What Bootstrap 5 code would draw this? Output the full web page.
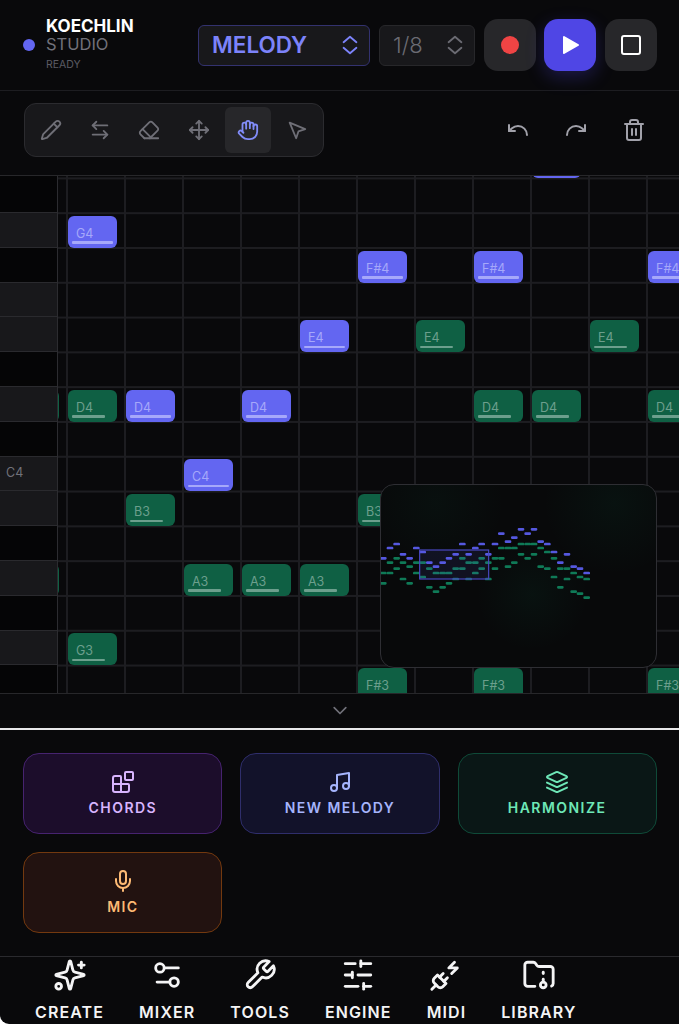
<!DOCTYPE html>
<html lang="en">
<head>
    <meta charset="UTF-8">
    <meta name="viewport" content="width=device-width, initial-scale=1.0">
    <title>Koechlin Studio</title>
    <link href="https://cdn.jsdelivr.net/npm/bootstrap@5.3.2/dist/css/bootstrap.min.css" rel="stylesheet">
    <style>
        html, body { height: 100%; }
        body { background: #fff; font-family: Inter, "Liberation Sans", sans-serif; overflow: hidden; }
        .app { width: 679px; height: 1024px; background: #09090b; border-bottom-left-radius: 9px; overflow: hidden; }
        .ico { fill: none; stroke: currentColor; stroke-width: 2; stroke-linecap: round; stroke-linejoin: round; flex: none; }

        /* header */
        .top-bar { height: 91px; border-bottom: 1px solid #1d1d21; padding: 19px 22px 19px 23px; }
        .live-dot { width: 12px; height: 12px; border-radius: 50%; background: #6366f1; margin-right: 11px; }
        .brand { width: 152px; line-height: 18px; }
        .brand-a { font-size: 17px; font-weight: 700; color: #fff; }
        .brand-b { font-size: 16.5px; color: #71717a; }
        .brand-c { font-size: 10.5px; color: #5b5b63; margin-top: 4px; line-height: 16px; }
        .picker { height: 41px; border-radius: 6px; background: #18181b; border: 1px solid #27272a; padding: 0 8px 0 13px; }
        .picker-main { width: 172px; border-color: #33326f; color: #7c83fa; font-size: 22.5px; font-weight: 600; margin-right: 9px; }
        .picker-sub { width: 96px; color: #6b6b73; font-size: 22px; font-weight: 300; margin-right: 9px; }
        .trn { width: 52px; height: 52px; border-radius: 14px; background: #27272a; color: #fff; margin-right: 8px; }
        .trn:last-child { margin-right: 0; }
        .trn-play { background: #4f46e5; box-shadow: 0 6px 18px rgba(79, 70, 229, .28); margin-right: 9px; }
        .rec-dot { width: 18px; height: 18px; border-radius: 50%; background: #ef4444; }

        /* toolbar */
        .tool-bar { height: 85px; border-bottom: 1px solid #27272a; padding: 0 22px 7px 24px; }
        .tool-group { width: 300px; height: 54px; background: #18181b; border: 1px solid #2b2b2f; border-radius: 12px; padding: 3px; gap: 3.25px; }
        .tool-btn { width: 46px; height: 46px; border-radius: 6px; color: #6f6f77; }
        .tool-on { background: #27272a; color: #818cf8; }
        .side-btn { width: 46px; height: 46px; color: #a1a1aa; }

        /* piano roll */
        .roll { height: 517px; overflow: hidden; }
        .keys { width: 58px; border-right: 1px solid #2c2c30; background: #050506; z-index: 2; flex: none; }
        .pkey { height: 34.8px; border-bottom: 1px solid #2a2a2e; color: #71717a; font-size: 12.5px; padding-left: 6px; flex: none; }
        .pkey-w { background: #18181b; }
        .pkey-first { height: 37px; }
        .grid-area {
            background-color: #09090b;
            background-image: linear-gradient(to right, #1d1d21 2px, transparent 2px), linear-gradient(to bottom, #1d1d21 2px, transparent 2px);
            background-size: 58px 100%, 100% 34.8px;
            background-position: 8px 0, 0 1.4px;
        }
        .pnote { position: absolute; width: 49px; height: 32px; border-radius: 6px; font-size: 12.5px; line-height: 1; padding: 12px 0 0 8px; }
        .pnote::after { content: ""; position: absolute; left: 4px; bottom: 4px; height: 2.5px; border-radius: 1px; background: currentColor; }
        .pnote-b { background: #6366f1; color: #a6a8fa; }
        .pnote-b::after { width: 41px; }
        .pnote-g { background: #0f6044; color: #6c9f8d; }
        .pnote-g::after { width: 33px; }
        .minimap {
            position: absolute; right: 22px; top: 308px; width: 277px; height: 184px; z-index: 3;
            background: radial-gradient(circle at 55% 60%, rgba(16, 185, 129, .05), transparent 30%), radial-gradient(circle at 85% 10%, rgba(16, 185, 129, .05), transparent 25%), radial-gradient(circle at 20% 10%, rgba(16, 185, 129, .04), transparent 25%), #08090a;
            border: 1px solid #2e2e33; border-radius: 14px; overflow: hidden;
        }
        .fold-bar { height: 35px; border-top: 1px solid #27272a; color: #71717a; }
        .sheet-line { height: 2px; background: #e8e8ea; }

        /* actions */
        .action-grid { display: grid; grid-template-columns: repeat(3, 1fr); gap: 18px; padding: 23px 22.3px 23px 23.3px; height: 226px; grid-auto-rows: 81px; }
        .act { border-radius: 16px; border: 1px solid; font-size: 14px; font-weight: 600; letter-spacing: 1.45px; line-height: 1; gap: 7px; padding: 0 0 2px; }
        .act-pur, .act-pur:hover { background: #1c0d2b; border-color: #46236f; color: #d8b4fe; }
        .act-ind, .act-ind:hover { background: #12122a; border-color: #2f2e6b; color: #a5b4fc; }
        .act-grn, .act-grn:hover { background: #0a1716; border-color: #0f4a38; color: #6ee7b7; }
        .act-org, .act-org:hover { background: #221210; border-color: #73390f; color: #fdba74; }

        /* bottom nav */
        .bottom-nav { height: 68px; border-top: 1px solid #2a2a2e; padding-left: 35px; gap: 35px; color: #f4f4f5; }
        .nav-item { font-size: 16px; font-weight: 600; letter-spacing: 1.1px; line-height: 1; gap: 12px; padding-top: 1px; }
    </style>
</head>
<body>
<div class="app d-flex flex-column">

    <div class="top-bar d-flex align-items-center">
        <span class="live-dot"></span>
        <div class="brand">
            <div class="brand-a">KOECHLIN</div>
            <div class="brand-b">STUDIO</div>
            <div class="brand-c">READY</div>
        </div>
        <div class="picker picker-main d-flex align-items-center justify-content-between">
            MELODY
            <svg class="ico" width="22" height="24" viewBox="0 0 24 24"><path d="m5 15 7 6 7-6"/><path d="m5 9 7-6 7 6"/></svg>
        </div>
        <div class="picker picker-sub d-flex align-items-center justify-content-between">
            1/8
            <svg class="ico" width="22" height="24" viewBox="0 0 24 24"><path d="m5 15 7 6 7-6"/><path d="m5 9 7-6 7 6"/></svg>
        </div>
        <div class="trn d-flex align-items-center justify-content-center"><span class="rec-dot"></span></div>
        <div class="trn trn-play d-flex align-items-center justify-content-center">
            <svg width="24" height="24" viewBox="0 0 24 24"><path d="M6 4 20 12 6 20z" fill="#fff" stroke="#fff" stroke-width="2" stroke-linejoin="round"/></svg>
        </div>
        <div class="trn d-flex align-items-center justify-content-center">
            <svg class="ico" width="24" height="24" viewBox="0 0 24 24"><rect x="3" y="3" width="18" height="18" rx="2"/></svg>
        </div>
    </div>

    <div class="tool-bar d-flex align-items-center justify-content-between">
        <div class="tool-group d-flex align-items-center">
            <div class="tool-btn d-flex align-items-center justify-content-center">
                <svg class="ico" width="22" height="22" viewBox="0 0 24 24"><path d="M21.174 6.812a1 1 0 0 0-3.986-3.987L3.842 16.174a2 2 0 0 0-.5.83l-1.321 4.352a.5.5 0 0 0 .623.622l4.353-1.32a2 2 0 0 0 .83-.497z"/><path d="m15 5 4 4"/></svg>
            </div>
            <div class="tool-btn d-flex align-items-center justify-content-center">
                <svg class="ico" width="22" height="22" viewBox="0 0 24 24"><path d="M8 3 4 7l4 4"/><path d="M4 7h16"/><path d="m16 21 4-4-4-4"/><path d="M20 17H4"/></svg>
            </div>
            <div class="tool-btn d-flex align-items-center justify-content-center">
                <svg class="ico" width="22" height="22" viewBox="0 0 24 24"><path d="m7 21-4.3-4.3c-1-1-1-2.5 0-3.4l9.6-9.6c1-1 2.5-1 3.4 0l5.6 5.6c1 1 1 2.5 0 3.4L13 21"/><path d="M22 21H7"/><path d="m5 11 9 9"/></svg>
            </div>
            <div class="tool-btn d-flex align-items-center justify-content-center">
                <svg class="ico" width="22" height="22" viewBox="0 0 24 24"><path d="M12 2v20"/><path d="m15 19-3 3-3-3"/><path d="m19 9 3 3-3 3"/><path d="M2 12h20"/><path d="m5 9-3 3 3 3"/><path d="m9 5 3-3 3 3"/></svg>
            </div>
            <div class="tool-btn tool-on d-flex align-items-center justify-content-center">
                <svg class="ico" width="22" height="22" viewBox="0 0 24 24"><path d="M18 11V6a2 2 0 0 0-2-2a2 2 0 0 0-2 2"/><path d="M14 10V4a2 2 0 0 0-2-2a2 2 0 0 0-2 2v2"/><path d="M10 10.5V6a2 2 0 0 0-2-2a2 2 0 0 0-2 2v8"/><path d="M18 8a2 2 0 1 1 4 0v6a8 8 0 0 1-8 8h-2c-2.8 0-4.5-.86-5.99-2.34l-3.6-3.6a2 2 0 0 1 2.83-2.82L7 15"/></svg>
            </div>
            <div class="tool-btn d-flex align-items-center justify-content-center">
                <svg class="ico" width="22" height="22" viewBox="0 0 24 24"><path d="m4 4 7.07 17 2.51-7.39L21 11.07z"/></svg>
            </div>
        </div>
        <div class="d-flex gap-2">
            <div class="side-btn d-flex align-items-center justify-content-center">
                <svg class="ico" width="24" height="24" viewBox="0 0 24 24"><path d="M3 7v6h6"/><path d="M21 17a9 9 0 0 0-9-9 9 9 0 0 0-6 2.3L3 13"/></svg>
            </div>
            <div class="side-btn ms-1 d-flex align-items-center justify-content-center">
                <svg class="ico" width="24" height="24" viewBox="0 0 24 24"><path d="M21 7v6h-6"/><path d="M3 17a9 9 0 0 1 9-9 9 9 0 0 1 6 2.3l3 2.7"/></svg>
            </div>
            <div class="side-btn ms-1 d-flex align-items-center justify-content-center">
                <svg class="ico" width="24" height="24" viewBox="0 0 24 24"><path d="M3 6h18"/><path d="M19 6v14c0 1-1 2-2 2H7c-1 0-2-1-2-2V6"/><path d="M8 6V4c0-1 1-2 2-2h4c1 0 2 1 2 2v2"/><path d="M10 11v6"/><path d="M14 11v6"/></svg>
            </div>
        </div>
    </div>

    <div class="roll d-flex position-relative">
        <div class="keys position-relative d-flex flex-column" id="keys"></div>
        <div class="grid-area flex-grow-1 position-relative" id="gridArea"></div>
        <div class="minimap">
            <svg width="275" height="182" viewBox="33 31 825 546" id="miniSvg"></svg>
        </div>
    </div>

    <div class="fold-bar d-flex align-items-center justify-content-center">
        <svg class="ico" width="20" height="20" viewBox="0 0 24 24"><path d="m5 8 7 7 7-7"/></svg>
    </div>
    <div class="sheet-line"></div>

    <div class="action-grid">
        <button class="btn act act-pur d-flex flex-column align-items-center justify-content-center">
            <svg class="ico" width="24" height="24" viewBox="0 0 24 24"><path d="M10 22V7a1 1 0 0 0-1-1H4a2 2 0 0 0-2 2v12a2 2 0 0 0 2 2h12a2 2 0 0 0 2-2v-5a1 1 0 0 0-1-1H2"/><rect x="14" y="2" width="8" height="8" rx="1"/></svg>
            CHORDS
        </button>
        <button class="btn act act-ind d-flex flex-column align-items-center justify-content-center">
            <svg class="ico" width="24" height="24" viewBox="0 0 24 24"><path d="M9 18V5l12-2v13"/><circle cx="6" cy="18" r="3"/><circle cx="18" cy="16" r="3"/></svg>
            NEW MELODY
        </button>
        <button class="btn act act-grn d-flex flex-column align-items-center justify-content-center">
            <svg class="ico" width="24" height="24" viewBox="0 0 24 24"><path d="M12.83 2.18a2 2 0 0 0-1.66 0L2.6 6.08a1 1 0 0 0 0 1.83l8.58 3.91a2 2 0 0 0 1.66 0l8.58-3.9a1 1 0 0 0 0-1.83Z"/><path d="m22 17.65-9.17 4.16a2 2 0 0 1-1.66 0L2 17.65"/><path d="m22 12.65-9.17 4.16a2 2 0 0 1-1.66 0L2 12.65"/></svg>
            HARMONIZE
        </button>
        <button class="btn act act-org d-flex flex-column align-items-center justify-content-center">
            <svg class="ico" width="24" height="24" viewBox="0 0 24 24"><path d="M12 2a3 3 0 0 0-3 3v7a3 3 0 0 0 6 0V5a3 3 0 0 0-3-3Z"/><path d="M19 10v2a7 7 0 0 1-14 0v-2"/><path d="M12 19v3"/></svg>
            MIC
        </button>
    </div>

    <div class="bottom-nav d-flex">
        <div class="nav-item d-flex flex-column align-items-center">
            <svg class="ico" width="34" height="34" viewBox="0 0 24 24"><path d="M9.937 15.5A2 2 0 0 0 8.5 14.063l-6.135-1.582a.5.5 0 0 1 0-.962L8.5 9.936A2 2 0 0 0 9.937 8.5l1.582-6.135a.5.5 0 0 1 .963 0L14.063 8.5A2 2 0 0 0 15.5 9.937l6.135 1.581a.5.5 0 0 1 0 .964L15.5 14.063a2 2 0 0 0-1.437 1.437l-1.582 6.135a.5.5 0 0 1-.963 0z"/><path d="M20 3v4"/><path d="M22 5h-4"/><circle cx="4" cy="20" r="2"/></svg>
            CREATE
        </div>
        <div class="nav-item d-flex flex-column align-items-center">
            <svg class="ico" width="34" height="34" viewBox="0 0 24 24"><path d="M20 7h-9"/><path d="M14 17H5"/><circle cx="17" cy="17" r="3"/><circle cx="7" cy="7" r="3"/></svg>
            MIXER
        </div>
        <div class="nav-item d-flex flex-column align-items-center">
            <svg class="ico" width="34" height="34" viewBox="0 0 24 24"><path d="M14.7 6.3a1 1 0 0 0 0 1.4l1.6 1.6a1 1 0 0 0 1.4 0l3.77-3.77a6 6 0 0 1-7.94 7.94l-6.91 6.91a2.12 2.12 0 0 1-3-3l6.91-6.91a6 6 0 0 1 7.94-7.94l-3.76 3.76z"/></svg>
            TOOLS
        </div>
        <div class="nav-item d-flex flex-column align-items-center">
            <svg class="ico" width="34" height="34" viewBox="0 0 24 24"><path d="M21 4h-7"/><path d="M10 4H3"/><path d="M21 12h-9"/><path d="M8 12H3"/><path d="M21 20h-5"/><path d="M12 20H3"/><path d="M14 2v4"/><path d="M8 10v4"/><path d="M16 18v4"/></svg>
            ENGINE
        </div>
        <div class="nav-item d-flex flex-column align-items-center">
            <svg class="ico" width="34" height="34" viewBox="0 0 24 24"><path d="M6.3 20.3a2.4 2.4 0 0 0 3.4 0L12 18l-6-6-2.3 2.3a2.4 2.4 0 0 0 0 3.4Z"/><path d="m2 22 3-3"/><path d="M7.5 13.5 10 11"/><path d="M10.5 16.5 13 14"/><path d="m18 3-4 4h6l-4 4"/></svg>
            MIDI
        </div>
        <div class="nav-item d-flex flex-column align-items-center">
            <svg class="ico" width="34" height="34" viewBox="0 0 24 24"><circle cx="15" cy="19" r="2"/><path d="M20.9 19.8A2 2 0 0 0 22 18V8a2 2 0 0 0-2-2h-7.9a2 2 0 0 1-1.69-.9L9.6 3.9A2 2 0 0 0 7.93 3H4a2 2 0 0 0-2 2v13a2 2 0 0 0 2 2h5.1"/><path d="M15 11v-1"/><path d="M15 17v-2"/></svg>
            LIBRARY
        </div>
    </div>
</div>

<script src="https://cdn.jsdelivr.net/npm/bootstrap@5.3.2/dist/js/bootstrap.bundle.min.js"></script>
<script>
    // piano keys, top to bottom (1 = light row)
    const keyRows = [0, 1, 0, 1, 1, 0, 1, 0, 1, 1, 0, 1, 0, 1, 0];
    const keysEl = document.getElementById('keys');
    keyRows.forEach((light, i) => {
        const k = document.createElement('div');
        k.className = 'pkey d-flex align-items-center' + (light ? ' pkey-w' : '') + (i === 0 ? ' pkey-first' : '');
        if (i === 8) k.textContent = 'C4';
        keysEl.appendChild(k);
    });

    // notes: [label, column, row, colour]
    const notes = [
        ['', 8, -2, 'b'], ['G4', 0, 0, 'b'],
        ['F#4', 5, 1, 'b'], ['F#4', 7, 1, 'b'], ['F#4', 10, 1, 'b'],
        ['E4', 4, 3, 'b'], ['E4', 6, 3, 'g'], ['E4', 9, 3, 'g'],
        ['', -1, 5, 'g'], ['D4', 0, 5, 'g'], ['D4', 1, 5, 'b'], ['D4', 3, 5, 'b'],
        ['D4', 7, 5, 'g'], ['D4', 8, 5, 'g'], ['D4', 10, 5, 'g'],
        ['C4', 2, 7, 'b'], ['B3', 1, 8, 'g'], ['B3', 5, 8, 'g'],
        ['', -1, 10, 'g'], ['A3', 2, 10, 'g'], ['A3', 3, 10, 'g'], ['A3', 4, 10, 'g'],
        ['G3', 0, 12, 'g'], ['F#3', 5, 13, 'g'], ['F#3', 7, 13, 'g'], ['F#3', 10, 13, 'g']
    ];
    const gridArea = document.getElementById('gridArea');
    notes.forEach(([label, col, row, tone]) => {
        const n = document.createElement('div');
        n.className = 'pnote pnote-' + tone;
        n.style.left = (10 + col * 58) + 'px';
        n.style.top = (39.7 + row * 34.8) + 'px';
        n.textContent = label;
        gridArea.appendChild(n);
    });

    // minimap dashes
    const miniBlue = [[453,164],[492,164],[473,177],[394,177],[433,189],[414,201],[512,201],[532,208],[375,208],[335,208],[277,208],[80,208],[60,220],[139,220],[316,220],[158,232],[552,232],[99,239],[257,239],[296,239],[355,239],[591,239],[40,251],[119,251],[237,251],[178,264],[218,264],[571,264],[198,276],[611,276],[630,282],[650,295]];
    const miniGreen = [[453,208],[473,208],[492,208],[394,220],[414,220],[433,220],[512,220],[532,232],[453,239],[492,239],[473,251],[552,251],[80,251],[277,251],[335,251],[375,251],[394,251],[60,264],[99,264],[139,264],[158,264],[296,264],[316,264],[355,264],[433,264],[119,276],[414,276],[512,276],[80,282],[178,282],[257,282],[277,282],[335,282],[375,282],[532,282],[571,282],[591,282],[40,295],[60,295],[139,295],[198,295],[218,295],[237,295],[316,295],[611,295],[158,307],[552,307],[630,307],[99,313],[257,313],[296,313],[355,313],[591,313],[650,313],[40,326],[119,326],[237,326],[178,338],[218,338],[571,338],[198,351],[611,351],[630,357],[650,369]];
    const dash = (p, fill) => `<rect x="${p[0] - 10}" y="${p[1] - 4}" width="20" height="8" rx="3.5" fill="${fill}"/>`;
    document.getElementById('miniSvg').innerHTML =
        miniGreen.map(p => dash(p, '#0f7a57')).join('') +
        miniBlue.map(p => dash(p, '#5558e0')).join('') +
        '<rect x="149" y="226" width="207" height="87" fill="#6366f1" fill-opacity=".1" stroke="#4a49c4" stroke-width="3.5"/>';
</script>
</body>
</html>
